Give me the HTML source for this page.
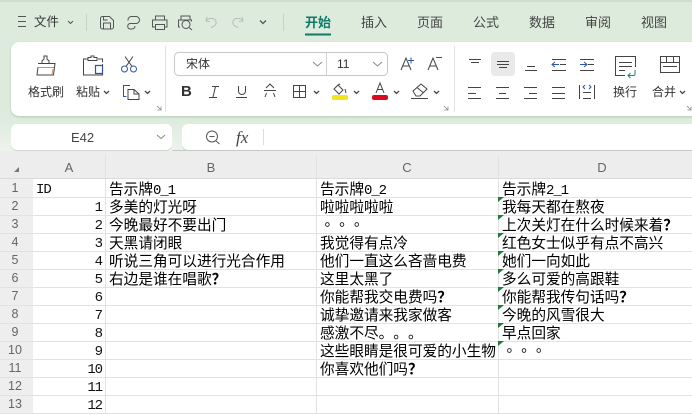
<!DOCTYPE html>
<html lang="zh"><head><meta charset="utf-8"><title>表格</title>
<style>
html,body{margin:0;padding:0}
body{width:692px;height:414px;overflow:hidden;position:relative;background:#fff;font-family:"Liberation Sans","Noto Sans CJK SC",sans-serif;color:#333}
div{position:absolute;white-space:nowrap}
svg{position:absolute;left:0;top:0}
.t{font-size:12px;line-height:16px;color:#333}
.tab{font-size:13px;line-height:18px;top:14px;color:#444}
.c{font-family:"WenQuanYi Zen Hei","Noto Sans CJK SC",sans-serif;font-size:14.67px;line-height:18px;color:#000;text-spacing-trim:space-all}
.l{font-family:"Liberation Mono",monospace;font-size:14px;letter-spacing:-1.07px}
.p{font-family:"Noto Sans CJK TC",sans-serif;text-spacing-trim:space-all;font-feature-settings:"chws" 0,"halt" 0,"palt" 0}
.q{font-family:"Noto Sans CJK TC",sans-serif;font-weight:700}
.n{font-family:"Liberation Mono",monospace;font-size:14px;letter-spacing:-1.07px;line-height:18px;color:#111;right:590px;margin-top:1px}
.b{left:109px}.k{left:320px}.d{left:502px}
.h{font-size:13px;line-height:16px;color:#666;width:20px;text-align:center}
.rn{left:2px;width:26px;text-align:center;font-size:12.5px;line-height:18px;color:#666}
.r1{top:180px}.r2{top:198px}.r3{top:216px}.r4{top:234px}.r5{top:252px}.r6{top:270px}.r7{top:288px}.r8{top:306px}.r9{top:324px}.r10{top:342px}.r11{top:360px}.r12{top:378px}.r13{top:396px}
</style></head><body>
<div style="left:0;top:0;width:692px;height:151px;background:linear-gradient(#dcebdc 0,#dcebdc 118px,#edf3ed 151px)"></div>
<div style="left:0;top:0;width:692px;height:2px;background:#cfdccf"></div>
<div style="left:11px;top:42px;width:690px;height:74px;background:#fff;border-radius:8px;box-shadow:0 1px 2px #b8c8b8"></div>
<div style="left:11px;top:124px;width:161px;height:26px;background:#fff;border-radius:6px;box-shadow:0 1px 0 #d0d6d0"></div>
<div style="left:182px;top:124px;width:520px;height:26px;background:#fff;border-radius:6px;box-shadow:0 1px 0 #c4c8c4"></div>
<div style="left:0;top:151px;width:692px;height:28px;background:#ededed"></div>
<div style="left:0;top:179px;width:33px;height:235px;background:#eeeeee"></div>

<svg width="692" height="414" viewBox="0 0 692 414" fill="none" stroke-width="1">
<!-- grid -->
<g stroke="#e2e2e2">
<path d="M105.500 155V414M316.500 155V414M498.500 155V414"/>
<path d="M0 197.500H692M0 215.500H692M0 233.500H692M0 251.500H692M0 269.500H692M0 287.500H692M0 305.500H692M0 323.500H692M0 341.500H692M0 359.500H692M0 377.500H692M0 395.500H692M0 413.500H692"/>
</g>
<path d="M0 178.500H692" stroke="#dadada"/>
<path d="M172 150.500H692" stroke="#c6c8c6"/>
<path d="M14 172h5v-5Z" fill="#777"/>
<!-- green triangles -->
<g fill="#1b7d3a"><path d="M498 197h6l-6 5Z"/><path d="M498 215h6l-6 5Z"/><path d="M498 233h6l-6 5Z"/><path d="M498 251h6l-6 5Z"/><path d="M498 269h6l-6 5Z"/><path d="M498 287h6l-6 5Z"/><path d="M498 305h6l-6 5Z"/><path d="M498 323h6l-6 5Z"/><path d="M498 341h6l-6 5Z"/></g>
<!-- quick bar -->
<g stroke="#555">
<path d="M18 16.500H26M18 21.500H26M18 26.500H26"/>
<path d="M68 21l2.500 2.500L73 21"/>
<path d="M86.500 14V31" stroke="#c4d2c4"/>
<path d="M283.500 14V31" stroke="#c4d2c4"/>
<path d="M100.500 18.500a2 2 0 0 1 2-2h7l4 4v6.500a2 2 0 0 1-2 2h-9a2 2 0 0 1-2-2ZM103.500 29v-6h7v6M103.500 17v3h4"/>
<path d="M131 16.500h5a3.500 3.500 0 0 1 0 7h-6a2.800 2.800 0 0 0 0 5.500h2a3 3 0 0 0 3-3"/><path d="M128 20.500a3.500 3.500 0 0 1 3-4"/>
<path d="M155.500 20v-4h9v4M155 27h-2.500v-7h14.500v7h-2.500M155.500 24.500h9v5h-9Z"/>
<path d="M181 20v-4h9v4M180 27h-1.500v-7h13v1.500"/><circle cx="186" cy="24.500" r="4"/><path d="M189 27.500l3 2.500"/>
<path d="M260 20.500l3 3 3-3" stroke-width="1.300"/>
</g>
<g stroke="#bbb"><path d="M207 17l-1 4 4 .5M206 20.500c3-3 9-3 10 1 .7 3-2 5-5 6"/><path d="M242 17l1 4-4 .5M243 20.500c-3-3-9-3-10 1-.7 3 2 5 5 6"/></g>
<path d="M305 34.500H331" stroke="#0f7a6a" stroke-width="2"/>
<!-- separators -->
<path d="M165.500 46V112M454.500 46V112" stroke="#e2e2e2"/>
<!-- brush -->
<g stroke="#444"><path d="M38 63.500h17l-1.500 11.500H37l1-8"/><path d="M42 63v-2c0-1 2-1 2-2v-3h3v3c0 1 2 1 2 2v2"/><path d="M38 67.500h16" stroke="#d98a5b"/><path d="M53 69l-1 5" stroke="#d98a5b"/></g>
<!-- paste -->
<g stroke="#444"><path d="M88 59h-4.500v16h19v-11"/><path d="M98 59h4.500v3"/><path d="M88 60.500v-3h3v-1.500h3v1.500h3v3Z"/></g>
<path d="M95.500 65.500h7v8h-7Z" stroke="#2f55a8" stroke-width="1.200"/>
<!-- scissors -->
<g stroke="#2f55a8"><circle cx="124.500" cy="69" r="3"/><circle cx="133.500" cy="69" r="3"/></g><path d="M126 66.500L133 56.500M132 66.500L125 56.500" stroke="#444"/>
<!-- copy -->
<path d="M130 85.500h-6.500v11h3" stroke="#2f55a8"/>
<path d="M128 89.500h6l5 4.500v5.500h-11ZM134 89.500V94h5" stroke="#444"/>
<g stroke="#444" stroke-width="1.300"><path d="M104 91l2.500 2.500L109 91M145 91l2.500 2.500L150 91M314 91l2.500 2.500L319 91M354 91l2.500 2.500L359 91M394 91l2.500 2.500L399 91M434 91l2.500 2.500L439 91M680 91l2.500 2.500L685 91"/></g>
<path d="M157 106l4 4M161 106.500V110h-3.500M444 106l4 4M448 106.500V110h-3.500M687 106l4 4M691 106.500V110h-3.500" stroke="#888" stroke-width=".8"/>
<!-- font combo -->
<rect x="174.500" y="52.500" width="213" height="23" rx="4" fill="#fff" stroke="#c8c8c8"/>
<path d="M326.500 53V75" stroke="#d0d0d0"/>
<path d="M313 62l4.500 4 4.500-4M373 62l4.500 4 4.500-4" stroke="#888"/>
<!-- A+ A- -->
<g stroke="#444"><path d="M401 70l5-12 5 12M402.800 66h6.400M428 70l5-12 5 12M429.800 66h6.400"/></g>
<path d="M408 60.500h6M411 57.500v6M436 57.500h6" stroke="#2f55a8"/>
<!-- I -->
<path d="M212 86.500h7M215.500 86.500l-2.500 10.500M209 97.500h8" stroke="#444"/>
<!-- U -->
<path d="M238.500 86v5a3.500 3.500 0 0 0 7 0v-5M236 97.500h11" stroke="#444"/>
<!-- strike -->
<path d="M266 88l4-4 4 4M266.500 93l-1.500 4M273.500 93l1.500 4M264 90.500h12" stroke="#444"/>
<!-- borders -->
<path d="M293.500 85.500h12v12h-12ZM299.500 85.500v12M293.500 91.500h12" stroke="#444"/>
<!-- fill -->
<path d="M334 89l4-4 5 5-4 4ZM338 85l2-1M345 89l1 4" stroke="#444"/>
<rect x="332" y="95" width="16" height="5" rx="2" fill="#f2e51c"/>
<!-- font colour -->
<path d="M376 93l4-10 4 10M377.500 89.500h5" stroke="#444"/>
<rect x="372" y="95" width="16" height="5" rx="2" fill="#dd0a1e"/>
<!-- eraser -->
<path d="M413 91l8-7 6 5-7 7h-4ZM417 87.500l6 5M411 98.500h17" stroke="#444"/>
<!-- alignment -->
<rect x="491" y="52" width="24" height="24" rx="4" fill="#e9e9e9"/>
<g stroke="#444">
<path d="M469 59.500h12M471 62.500h8"/>
<path d="M497 61.500h12M497 64.500h12M499 67.500h8"/>
<path d="M527 66.500h8M525 70.500h12"/>
<path d="M552 59.500h14M560 64.500h6M552 70.500h14"/>
<path d="M580 59.500h14M588 64.500h6M580 70.500h14"/>
<path d="M468 87.500h13M468 93.500h8M468 98.500h13"/>
<path d="M496 87.500h13M499 93.500h7M496 98.500h13"/>
<path d="M524 87.500h13M529 93.500h8M524 98.500h13"/>
<path d="M552 87.500h13M552 93.500h13M552 98.500h13"/>
<path d="M579.500 85v14M594.500 85v14M583 92.500h8M583 98.500h8"/>
</g>
<g stroke="#2f55a8"><path d="M552 64.500h7M555 62l-3 2.500 3 2.500"/><path d="M580 64.500h7M584 62l3 2.500-3 2.500"/><path d="M585 85l-2 2 2 2M589 85l2 2-2 2"/></g>
<!-- wrap -->
<path d="M635.500 67V56.500H615.500V75.500H625M619 62.500h13M619 66.500h13M619 70.500h6" stroke="#444"/>
<path d="M635 70v4a1.500 1.500 0 0 1-1.500 1.500H628M630.500 73l-2.500 2.500 2.500 2.500" stroke="#1b8a6a"/>
<!-- merge -->
<path d="M660.500 56.500h19v16h-19ZM660.500 62.500h19M666.500 56.500v6M673.500 56.500v6M663 66.500h14" stroke="#444"/>
<!-- name/formula -->
<path d="M157 135l4 3.500 4-3.500" stroke="#888"/>
<circle cx="212" cy="136.500" r="5.500" stroke="#555"/><path d="M209.500 136.500h5M216 141l3.500 3" stroke="#555"/>
<path d="M263.500 129V145" stroke="#ddd"/>
</svg>

<!-- quick bar text -->
<div class="t" style="left:34px;top:14px;font-size:12.500px">文件</div>
<div style="left:305px;top:14px;font-size:13px;line-height:18px;font-weight:bold;color:#0f7a6a">开始</div>
<div class="tab" style="left:361px">插入</div>
<div class="tab" style="left:417px">页面</div>
<div class="tab" style="left:473px">公式</div>
<div class="tab" style="left:529px">数据</div>
<div class="tab" style="left:585px">审阅</div>
<div class="tab" style="left:641px">视图</div>
<!-- ribbon text -->
<div class="t" style="left:28px;top:84px">格式刷</div>
<div class="t" style="left:76px;top:84px">粘贴</div>
<div class="t" style="left:186px;top:56px">宋体</div>
<div class="t" style="left:337px;top:56px">11</div>
<div style="left:181px;top:83px;font-size:15px;line-height:18px;font-weight:bold;color:#333">B</div>
<div class="t" style="left:613px;top:84px">换行</div>
<div class="t" style="left:652px;top:84px">合并</div>
<!-- formula -->
<div style="left:71px;top:130px;font-size:13px;line-height:16px;color:#444">E42</div>
<div style="left:236px;top:128px;font-size:17px;line-height:20px;font-style:italic;font-family:'Liberation Serif',serif;color:#444">fx</div>
<!-- headers -->
<div class="h" style="left:59px;top:160px">A</div>
<div class="h" style="left:201px;top:160px">B</div>
<div class="h" style="left:397px;top:160px">C</div>
<div class="h" style="left:592px;top:160px">D</div>
<!-- row numbers -->
<div class="rn" style="top:179px">1</div><div class="rn" style="top:197px">2</div><div class="rn" style="top:215px">3</div><div class="rn" style="top:233px">4</div><div class="rn" style="top:251px">5</div><div class="rn" style="top:269px">6</div><div class="rn" style="top:287px">7</div><div class="rn" style="top:305px">8</div><div class="rn" style="top:323px">9</div><div class="rn" style="top:341px">10</div><div class="rn" style="top:359px">11</div><div class="rn" style="top:377px">12</div><div class="rn" style="top:395px">13</div>
<!-- column A -->
<div class="n r1" style="left:36px;right:auto">ID</div>
<div class="n r2">1</div><div class="n r3">2</div><div class="n r4">3</div><div class="n r5">4</div><div class="n r6">5</div><div class="n r7">6</div><div class="n r8">7</div><div class="n r9">8</div><div class="n r10">9</div><div class="n r11">10</div><div class="n r12">11</div><div class="n r13">12</div>
<!-- column B -->
<div class="c b r1">告示牌<span class="l">0_1</span></div>
<div class="c b r2">多美的灯光呀</div>
<div class="c b r3">今晚最好不要出门</div>
<div class="c b r4">天黑请闭眼</div>
<div class="c b r5">听说三角可以进行光合作用</div>
<div class="c b r6">右边是谁在唱歌<span class="q">&#xFF1F;</span></div>
<!-- column C -->
<div class="c k r1">告示牌<span class="l">0_2</span></div>
<div class="c k r2">啦啦啦啦啦</div>
<div class="c k r3"><span class="p">。。。</span></div>
<div class="c k r4">我觉得有点冷</div>
<div class="c k r5">他们一直这么吝啬电费</div>
<div class="c k r6">这里太黑了</div>
<div class="c k r7">你能帮我交电费吗<span class="q">&#xFF1F;</span></div>
<div class="c k r8">诚挚邀请来我家做客</div>
<div class="c k r9">感激不尽<span class="p">。。。</span></div>
<div class="c k r10">这些眼睛是很可爱的小生物</div>
<div class="c k r11">你喜欢他们吗<span class="q">&#xFF1F;</span></div>
<!-- column D -->
<div class="c d r1">告示牌<span class="l">2_1</span></div>
<div class="c d r2">我每天都在熬夜</div>
<div class="c d r3">上次关灯在什么时候来着<span class="q">&#xFF1F;</span></div>
<div class="c d r4">红色女士似乎有点不高兴</div>
<div class="c d r5">她们一向如此</div>
<div class="c d r6">多么可爱的高跟鞋</div>
<div class="c d r7">你能帮我传句话吗<span class="q">&#xFF1F;</span></div>
<div class="c d r8">今晚的风雪很大</div>
<div class="c d r9">早点回家</div>
<div class="c d r10"><span class="p">。。。</span></div>
</body></html>
